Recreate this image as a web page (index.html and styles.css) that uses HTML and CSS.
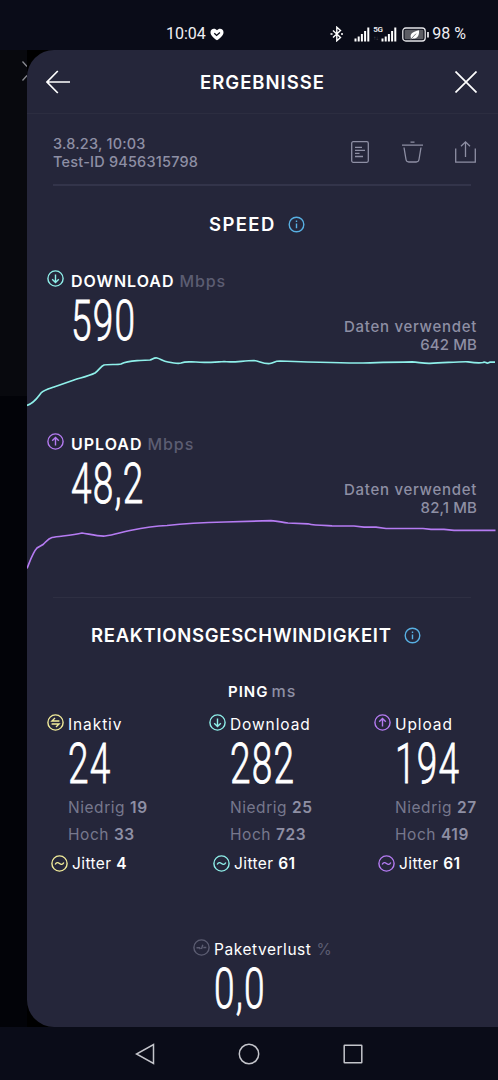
FILE: index.html
```html
<!DOCTYPE html>
<html lang="de">
<head>
    <meta charset="UTF-8">
    <meta name="viewport" content="width=device-width, initial-scale=1.0">
    <title>Ergebnisse</title>
    <link rel="stylesheet" href="styles.css">
</head>
<body>
    <svg class="sprite">
        <symbol id="down" viewBox="0 0 17 17">
            <circle cx="8.5" cy="8.5" r="7.6"/>
            <path d="M8.5 4.5v8M5.2 9.3l3.3 3.2 3.3-3.2"/>
        </symbol>
        <symbol id="up" viewBox="0 0 17 17">
            <circle cx="8.5" cy="8.5" r="7.6"/>
            <path d="M8.5 12.5v-8M5.2 7.7l3.3-3.2 3.3 3.2"/>
        </symbol>
        <symbol id="idle" viewBox="0 0 17 17">
            <circle cx="8.5" cy="8.5" r="7.6"/>
            <path d="M12.4 7H5l3-2.900M4.600 10H12l-3 2.900"/>
        </symbol>
        <symbol id="jitter" viewBox="0 0 17 17">
            <circle cx="8.5" cy="8.5" r="7.6"/>
            <path d="M4.2 9.6c1-2.4 2.7-2.4 4.3-1.1s3.3 1.3 4.3-1.1"/>
        </symbol>
        <symbol id="loss" viewBox="0 0 17 17">
            <circle cx="8.5" cy="8.5" r="7.6"/>
            <path d="M3.5 8.7h3l.8 1.500M9.800 5.800L8.500 10M10.300 8.500h3"/>
        </symbol>
        <symbol id="info" viewBox="0 0 17 17">
            <circle cx="8.5" cy="8.5" r="7.3"/>
            <path d="M8.5 7.500v4.800M8.500 4.600v1.400"/>
        </symbol>
    </svg>

    <div class="status-bar">
        <div class="clock">
            <span>10:04</span>
            <svg width="14" height="13" viewBox="0 0 14 13">
                <path d="M7 12.300C3.500 10 .5 7.500.5 4.300.5 2 2 .7 3.900.7c1.300 0 2.400.6 3.100 1.600C7.700 1.300 8.800.7 10.100.7c1.900 0 3.400 1.300 3.400 3.600 0 3.200-3 5.700-6.500 8z" fill="#fff"/>
                <path d="M4.300 5.200l2.300 2.200 3.300-2.900" fill="none" stroke="#0a0c18" stroke-width="1.3"/>
            </svg>
        </div>
        <div class="system">
            <svg class="bluetooth" width="14" height="16" viewBox="0 0 14 16">
                <path d="M3 4.500l7.500 7-3.700 3.300V1.200l3.700 3.300-7.500 7M.5 8h2M11 8h2"/>
            </svg>
            <svg class="signal" width="16" height="15" viewBox="0 0 16 15">
                <path d="M1.500 14.500v-3M4.700 14.500v-5M7.900 14.500v-7.500M11.100 14.500V4M14.300 14.500V.5"/>
            </svg>
            <div class="network"><b>5G</b><span>↑↓</span></div>
            <svg class="signal" width="16" height="15" viewBox="0 0 16 15">
                <path d="M1.500 14.500v-3M4.700 14.500v-5M7.900 14.500v-7.500M11.100 14.500V4M14.300 14.500V.5"/>
            </svg>
            <svg class="battery" width="28" height="15" viewBox="0 0 28 15">
                <rect x=".8" y="1" width="22.4" height="13" rx="3" fill="none" stroke="#e4e4e8" stroke-width="1.3"/>
                <rect x="2.6" y="2.8" width="18.8" height="9.4" rx="1" fill="#5c5d64"/>
                <path d="M26 5v5.500" stroke="#e4e4e8" stroke-width="1.8"/>
                <path d="M17 3.200c.5 5-1.500 8.500-6 8.300l-2.500 1 .5-1.300C7.500 6.300 11 4.700 17 3.200z" fill="#fff"/>
                <path d="M9 12l5-5.300" stroke="#5c5d64" stroke-width=".8"/>
            </svg>
            <span class="percent">98 %</span>
        </div>
    </div>

    <div class="screen">
        <div class="behind">
            <svg width="5" height="20" viewBox="0 0 5 20"><path d="M.5.500L5 5.500M.5 19.500L5 14.500"/></svg>
        </div>
        <div class="panel">
            <div class="header">
                <svg width="24" height="24" viewBox="0 0 24 24"><path d="M24 12H1M11.800 1L1 12l10.800 11"/></svg>
                <h1>ERGEBNISSE</h1>
                <svg width="22" height="22" viewBox="0 0 22 22"><path d="M.5.500l21 21M21.500.500l-21 21"/></svg>
            </div>

            <div class="meta">
                <div class="test-id">3.8.23, 10:03<br>Test-ID 9456315798</div>
                <div class="actions">
                    <svg width="18" height="22" viewBox="0 0 18 22"><rect x=".7" y=".7" width="16.6" height="20.6" rx="1.5"/><path d="M4 6.300h7M4 9.300h10M4 12.300h4.500M4 15.500h8"/></svg>
                    <svg width="21" height="22" viewBox="0 0 21 22"><path d="M0 4.200h21M8.500 1.200h4M2 6.500l2 12c.3 1.800 1.200 2.500 2.800 2.500h7.400c1.600 0 2.500-.7 2.800-2.500l2-12"/></svg>
                    <svg width="21" height="22" viewBox="0 0 21 22"><path d="M.7 7.500v13.600h19.600V7.500M10.500 16V1.200M6 5.200l4.500-4.300L15 5.200"/></svg>
                </div>
            </div>

            <div class="title speed">
                <h2>SPEED</h2>
                <svg class="icon blue"><use href="#info"/></svg>
            </div>

            <div class="result">
                <div class="label"><svg class="icon teal"><use href="#down"/></svg><b>DOWNLOAD</b><span>Mbps</span></div>
                <div class="row">
                    <div class="value">590</div>
                    <div class="used">Daten verwendet<br><span>642 MB</span></div>
                </div>
                <svg class="chart teal" width="471" height="56" viewBox="27 354 471 56">
                    <path d="M27 405.500C35 402.500 37 398 41 393C44 390 48 389 54 387L74 380C82 377.500 89 376 95 373C99 370 101 366 104 365C109 364 117 365 121 364C127 361 134 361 140 360.500L150 360C153 359 154 357.500 157 358C161 359 163 361.500 168 362C173 363 178 364 181 363C186 361 190 362 196 362C205 363 215 362 224 361.500C233 363 243 360.500 254 360.500C260 361 262 364 270 363.500C275 362.500 274 361 280 361C310 362 340 363 363 363C380 362.500 395 362 412 361.800C420 362.500 424 363.500 430 363.300C445 363 457 361.500 468 361.800C476 363 480 363 483 362.500C485 361 486 363.500 488 363L490 362.200H495"/>
                </svg>
            </div>

            <div class="result">
                <div class="label"><svg class="icon purple"><use href="#up"/></svg><b>UPLOAD</b><span>Mbps</span></div>
                <div class="row">
                    <div class="value">48,2</div>
                    <div class="used">Daten verwendet<br><span>82,1 MB</span></div>
                </div>
                <svg class="chart purple" width="471" height="56" viewBox="27 517 471 56">
                    <path d="M27 568.500C30 561 33 552 37 548C39 546.500 41 546 43 544.500C46 542 48 538.500 52 537.500C60 536 72 535.500 82 533C89 534 98 536.500 105 536C114 535 120 532.500 130 530.500C145 527.500 155 526 167 525.500C185 523.500 205 522.500 225 522L271 520.700C278 521 282 522.500 288 523L308 523.800C314 525.500 324 525.500 332 525.800L354 526L364 527.200L376 527.200L386 528.500H423L431 529.300H444L454 530.400H495.500"/>
                </svg>
            </div>

            <hr>

            <div class="title response">
                <h2>REAKTIONSGESCHWINDIGKEIT</h2>
                <svg class="icon blue"><use href="#info"/></svg>
            </div>
            <div class="ping"><b>PING</b><span>ms</span></div>

            <div class="latency">
                <div class="column">
                    <div class="name"><svg class="icon yellow"><use href="#idle"/></svg>Inaktiv</div>
                    <div class="value">24</div>
                    <div class="range">Niedrig <b>19</b></div>
                    <div class="range">Hoch <b>33</b></div>
                    <div class="jitter"><svg class="icon yellow"><use href="#jitter"/></svg>Jitter <b>4</b></div>
                </div>
                <div class="column">
                    <div class="name"><svg class="icon teal"><use href="#down"/></svg>Download</div>
                    <div class="value">282</div>
                    <div class="range">Niedrig <b>25</b></div>
                    <div class="range">Hoch <b>723</b></div>
                    <div class="jitter"><svg class="icon teal"><use href="#jitter"/></svg>Jitter <b>61</b></div>
                </div>
                <div class="column">
                    <div class="name"><svg class="icon purple"><use href="#up"/></svg>Upload</div>
                    <div class="value">194</div>
                    <div class="range">Niedrig <b>27</b></div>
                    <div class="range">Hoch <b>419</b></div>
                    <div class="jitter"><svg class="icon purple"><use href="#jitter"/></svg>Jitter <b>61</b></div>
                </div>
            </div>

            <div class="column packet-loss">
                <div class="name"><svg class="icon grey"><use href="#loss"/></svg>Paketverlust <span>%</span></div>
                <div class="value">0,0</div>
            </div>
        </div>
    </div>

    <div class="nav-bar">
        <svg width="20" height="22" viewBox="0 0 20 22"><path d="M18.500 1.500v19L1.500 11z"/></svg>
        <svg width="22" height="22" viewBox="0 0 22 22"><circle cx="11" cy="11" r="9.7"/></svg>
        <svg width="20" height="20" viewBox="0 0 20 20"><rect x="1.2" y="1.2" width="17.6" height="17.6" rx=".5"/></svg>
    </div>
</body>
</html>
```
FILE: styles.css
```css
* {
    box-sizing: border-box;
}
body {
    margin: 0;
    height: 1080px;
    display: flex;
    flex-direction: column;
    background-color: #0a0c18;
    color: #fff;
    font-family: Inter, 'Liberation Sans', sans-serif;
    overflow: hidden;
}
svg {
    display: block;
    flex: none;
    fill: none;
}
b {
    font-weight: 600;
}
.sprite {
    position: absolute;
    width: 0;
    height: 0;
}

/* status bar */
.status-bar {
    height: 50px;
    padding: 18px 32px 0 166px;
    display: flex;
    justify-content: space-between;
    font-family: Roboto, sans-serif;
    font-size: 16px;
    line-height: 32px;
    color: #f0f0f4;
}
.clock, .system {
    display: flex;
    align-items: center;
    height: 32px;
}
.clock {
    gap: 4px;
}
.clock svg {
    margin-top: 1px;
}
.bluetooth {
    stroke: #fff;
    stroke-width: 1.4;
    margin-right: 10px;
}
.signal {
    stroke: #fff;
    stroke-width: 2;
}
.network {
    width: 10px;
    height: 16px;
    margin: 0 -2px 0 3px;
    font-size: 8px;
    line-height: 8px;
    letter-spacing: -0.5px;
}
.network b {
    display: block;
}
.network span {
    display: block;
    font-size: 6px;
    line-height: 7px;
    color: #55565e;
}
.battery {
    margin: 0 2px 0 5px;
}

/* sheet */
.screen {
    height: 977px;
    display: flex;
    background-color: #000;
}
.behind {
    width: 27px;
    padding: 11px 0 0 22px;
    background: linear-gradient(#08090e 346px, #020308 346px);
}
.behind svg {
    stroke: #8c8d94;
    stroke-width: 1.3;
}
.panel {
    flex: 1;
    background-color: #25263a;
    border-radius: 27px 0 0 27px;
}
.header {
    height: 64px;
    padding: 0 21px 0 19px;
    display: flex;
    align-items: center;
    justify-content: space-between;
    border-bottom: 1px solid #2c2d40;
}
.header svg {
    stroke: #fff;
    stroke-width: 1.7;
}
h1, h2 {
    margin: 0;
    font-size: 18.5px;
    font-weight: 600;
}
h1 {
    padding-top: 1px;
    letter-spacing: 1px;
}
h2 {
    letter-spacing: 0.7px;
}
.meta {
    height: 72px;
    margin: 0 27px 0 26px;
    display: flex;
    justify-content: space-between;
    border-bottom: 2px solid #33344a;
}
.test-id {
    padding-top: 21px;
    font-size: 14.5px;
    font-weight: 500;
    line-height: 18px;
    letter-spacing: 0.2px;
    color: #8e8fa4;
}
.actions {
    display: flex;
    gap: 32px;
    padding-top: 27px;
    margin-right: -5px;
}
.actions svg {
    stroke: #8e8fa4;
    stroke-width: 1.3;
}
.actions svg:first-child {
    margin-right: 1px;
}
.title {
    height: 76px;
    padding-left: 182px;
    display: flex;
    align-items: center;
    gap: 12px;
}
.speed h2 {
    letter-spacing: 1.4px;
}
.icon {
    width: 17px;
    height: 17px;
    stroke-width: 1.4;
}
.teal {
    stroke: #8ff0ea;
}
.purple {
    stroke: #b57bf2;
}
.yellow {
    stroke: #f2ec9a;
}
.blue {
    stroke: #58b0e3;
}
.grey {
    stroke: #5c5d72;
}

/* speed */
.result {
    height: 163px;
}
.label {
    height: 38px;
    padding: 0 0 1px 20px;
    display: flex;
    align-items: center;
    font-size: 16px;
}
.label .icon {
    margin: -4px 7px 0 0;
}
.label b {
    letter-spacing: 1px;
}
.label span {
    margin-left: 5px;
    font-weight: 500;
    color: #5c5d72;
    letter-spacing: 0.9px;
}
.row {
    height: 54px;
    padding: 0 21px 0 44px;
    display: flex;
    justify-content: space-between;
}
.value {
    font-family: Roboto, sans-serif;
    font-size: 56px;
    font-weight: 300;
    line-height: 42px;
    letter-spacing: 1.8px;
    transform: scaleX(0.66);
    transform-origin: left;
    -webkit-text-stroke: 0.9px #fff;
}
.used {
    padding-top: 18px;
    font-size: 15px;
    font-weight: 500;
    line-height: 18px;
    text-align: right;
    color: #8e8fa4;
    letter-spacing: 0.7px;
}
.used span {
    letter-spacing: 0.1px;
}
.chart {
    stroke-width: 1.7;
}
hr {
    height: 1px;
    margin: 9px 27px 0 26px;
    border: 0;
    background-color: #2e2f42;
}

/* latency */
.response {
    height: 74px;
    padding-left: 64px;
}
.ping {
    height: 38px;
    padding-left: 201px;
    font-size: 15px;
    line-height: 38px;
    letter-spacing: 1px;
}
.ping span {
    margin-left: 3px;
    font-size: 16px;
    font-weight: 500;
    color: #8e8fa4;
}
.latency {
    display: grid;
    grid-template-columns: 162px 165px 1fr;
    padding-left: 20px;
}
.name, .jitter {
    display: flex;
    align-items: center;
    font-size: 15.5px;
    white-space: pre;
}
.name {
    height: 28px;
    letter-spacing: 0.9px;
}
.name .icon {
    margin: -4px 4px 0 0;
}
.name span {
    color: #5c5d72;
}
.column .value {
    margin: 0 0 3px 21px;
    line-height: 53px;
}
.range {
    margin-left: 21px;
    font-size: 15.5px;
    line-height: 27px;
    letter-spacing: 0.55px;
    color: #77788d;
}
.range b {
    color: #8e8fa4;
}
.jitter {
    height: 31px;
    padding-left: 4px;
    letter-spacing: 0.4px;
}
.jitter .icon {
    margin-right: 4px;
}
.packet-loss {
    margin: 56px 0 0 166px;
}
.packet-loss .name {
    letter-spacing: 0.55px;
}

/* android navigation */
.nav-bar {
    flex: 1;
    display: flex;
    align-items: center;
    justify-content: center;
    gap: 83px;
}
.nav-bar svg {
    stroke: #c4c5cb;
    stroke-width: 1.5;
}
```
